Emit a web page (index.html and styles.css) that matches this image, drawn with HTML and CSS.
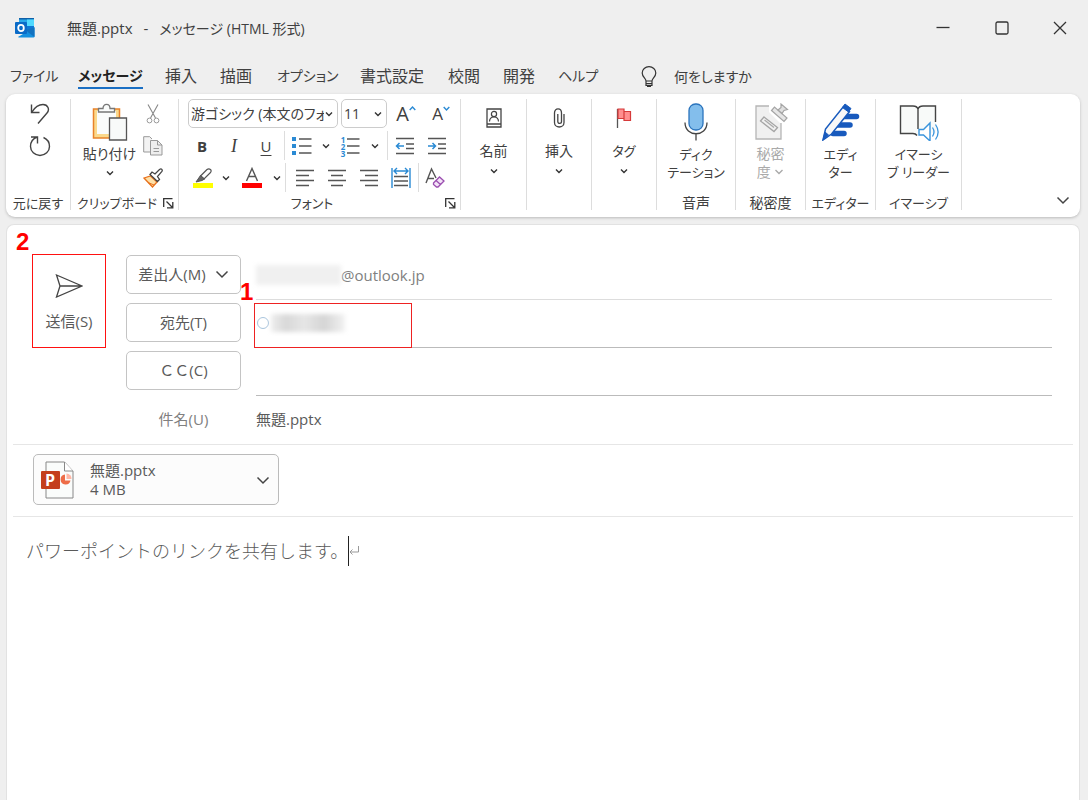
FILE: index.html
```html
<!DOCTYPE html>
<html lang="ja">
<head>
<meta charset="utf-8">
<meta name="viewport" content="width=device-width, initial-scale=1">
<title>無題.pptx - メッセージ (HTML 形式)</title>
<link rel="stylesheet" href="styles.css">
</head>
<body>
<svg class="defs" width="0" height="0" aria-hidden="true">
  <symbol id="chev" viewBox="0 0 10 10"><path d="M2 3.5 5 6.5 8 3.5" fill="none" stroke="#333" stroke-width="1.4"/></symbol>
  <symbol id="chev-lg" viewBox="0 0 14 14"><path d="M1.5 4.5 7 10l5.500-5.500" fill="none" stroke="#444" stroke-width="1.500"/></symbol>
  <symbol id="launch" viewBox="0 0 11 11"><path d="M.7 9V.7H9.500M3.500 3.500l5.500 5.500M9.800 4v5.800H4" fill="none" stroke="#333" stroke-width="1.300"/></symbol>
</svg>

<header class="titlebar">
  <svg class="logo" width="20" height="20" viewBox="0 0 20 20" aria-hidden="true">
    <path d="M4 0h15v12H4z" fill="#28a8ea"/><path d="M4 0h15v1.500H4z" fill="#1060a8"/>
    <path d="M12 1.500h7V8h-7z" fill="#50d9ff"/><path d="M11 8h8v5h-8z" fill="#0f78d4"/>
    <path d="M3 19 19.500 9v9.500a1 1 0 0 1-1 1H4a1 1 0 0 1-1-1z" fill="#1490df"/><path d="M10 12l9.500 7V9.500z" fill="#1272c0"/>
    <rect y="4" width="12" height="12" rx="1" fill="#0a6bc7"/><ellipse cx="6" cy="10" rx="2.800" ry="3.100" fill="none" stroke="#fff" stroke-width="1.800"/>
  </svg>
  <h1 class="title">無題.pptx<span class="dash">-</span><span class="kana">メッセージ (HTML 形式)</span></h1>
  <div class="winbtns">
    <button class="winbtn" aria-label="最小化"><svg width="14" height="14" viewBox="0 0 14 14"><path d="M.5 6.500h13" stroke="#333" stroke-width="1.300"/></svg></button>
    <button class="winbtn" aria-label="最大化"><svg width="14" height="14" viewBox="0 0 14 14"><rect x="1" y="1" width="12" height="12" rx="1.500" fill="none" stroke="#333" stroke-width="1.300"/></svg></button>
    <button class="winbtn" aria-label="閉じる"><svg width="14" height="14" viewBox="0 0 14 14"><path d="M1 1l12 12M13 1 1 13" stroke="#333" stroke-width="1.300"/></svg></button>
  </div>
</header>

<nav class="tabs" aria-label="リボン">
  <a href="#" class="tab kana">ファイル</a>
  <a href="#" class="tab kana active" aria-current="page">メッセージ</a>
  <a href="#" class="tab">挿入</a>
  <a href="#" class="tab">描画</a>
  <a href="#" class="tab kana">オプション</a>
  <a href="#" class="tab">書式設定</a>
  <a href="#" class="tab">校閲</a>
  <a href="#" class="tab">開発</a>
  <a href="#" class="tab kana">ヘルプ</a>
  <a href="#" class="tab tell"><svg width="16" height="22" viewBox="0 0 16 22" aria-hidden="true"><path d="M5 15c0-2.500-3.800-4-3.800-8a6.800 6.300 0 0 1 13.600 0c0 4-3.800 5.500-3.800 8zM5 17.700h6M6 20.300h4M5 15v4.500h6V15" fill="none" stroke="#333" stroke-width="1.200"/></svg>何をしますか</a>
</nav>

<section class="ribbon">
  <div class="group g-undo">
    <div class="tools stack">
      <button class="tool" aria-label="元に戻す"><svg width="20" height="22" viewBox="0 0 20 22"><path d="M1.500 1.500v8h8M2 9C5 4 9 1.500 13 1.500c5 0 7 5 4 8.500L8 20.500" fill="none" stroke="#444" stroke-width="1.400"/></svg></button>
      <button class="tool" aria-label="やり直し"><svg width="22" height="22" viewBox="0 0 22 22"><path d="M2 2h6.500v6.500M8.500 2C4 3.500 1.500 7 1.500 11.500a9.500 9 0 0 0 19 0c0-4-2.500-7.500-6-9" fill="none" stroke="#444" stroke-width="1.400"/></svg></button>
    </div>
    <div class="label">元に戻す</div>
  </div>

  <div class="group g-clip">
    <div class="tools clip">
      <button class="big paste"><svg width="36" height="38" viewBox="0 0 36 38" aria-hidden="true"><path d="M1.500 6h26v29h-26z" fill="#fbd98b" stroke="#e8822a" stroke-width="1.500"/><path d="M5 8h19v23H5z" fill="#fafcfb"/><path d="M6.500 9V5.500h4.500C11 0 18 0 18 5.500h4.500V9z" fill="#fafcfb" stroke="#777" stroke-width="1.300"/><path d="M17.500 15h17v22h-17z" fill="#f8faf9" stroke="#555" stroke-width="1.300"/></svg><span>貼り付け</span><svg width="10" height="10"><use href="#chev"/></svg></button>
      <div class="stack">
        <button class="tool" aria-label="切り取り"><svg width="14" height="20" viewBox="0 0 14 20"><path d="M2 .5 9.500 14M12 .5 4.500 14" fill="none" stroke="#888" stroke-width="1.100"/><circle cx="3.500" cy="16.500" r="2.400" fill="none" stroke="#999"/><circle cx="10.500" cy="16.500" r="2.400" fill="none" stroke="#999"/></svg></button>
        <button class="tool" aria-label="コピー"><svg width="20" height="20" viewBox="0 0 20 20"><path d="M7 16H.7V.7h6L9 3" fill="#f3f3f3" stroke="#999"/><path d="M7.500 4.500h7l4.500 4.500v10H7.500z" fill="#eee" stroke="#999"/><path d="M14.500 4.500V9H19M10.500 12.500h5.500M10.500 15.500h5.500" fill="none" stroke="#999"/></svg></button>
        <button class="tool" aria-label="書式のコピー"><svg width="20" height="20" viewBox="0 0 20 20"><path d="M1 10l6.500-2 6.500 6-4.500 5z" fill="#fde0a8" stroke="#e8701a" stroke-width="1.300"/><path d="M5 14.500l6 2.500" stroke="#e8701a"/><path d="M7 6.500l2-2.500 3 2L16.500 1.500c2-1.500 3.500.5 2.200 2.200L14.500 8.500l2 3-2 2z" fill="#fff" stroke="#444" stroke-width="1.300"/></svg></button>
      </div>
    </div>
    <div class="label with-launch"><span>クリップボード</span><button class="launch" aria-label="クリップボードの設定"><svg width="11" height="11"><use href="#launch"/></svg></button></div>
  </div>

  <div class="group g-font">
    <div class="tools fonts">
      <div class="frow r1">
        <label class="pick"><select aria-label="フォント"><option>游ゴシック (本文のフォント)</option></select><svg width="10" height="10"><use href="#chev"/></svg></label>
        <label class="pick"><select aria-label="フォント サイズ"><option>11</option></select><svg width="10" height="10"><use href="#chev"/></svg></label>
        <button class="tool grow" aria-label="フォント サイズの拡大">A<svg width="7" height="20" viewBox="0 0 7 20"><path d="M.7 6l2.800-3 2.800 3" fill="none" stroke="#2a8ad4" stroke-width="1.400"/></svg></button>
        <button class="tool shrink" aria-label="フォント サイズの縮小">A<svg width="7" height="20" viewBox="0 0 7 20"><path d="M.7 3l2.800 3 2.800-3" fill="none" stroke="#2a8ad4" stroke-width="1.400"/></svg></button>
      </div>
      <div class="frow r2">
        <button class="tool b">B</button>
        <button class="tool i">I</button>
        <button class="tool u">U</button>
        <i class="sep"></i>
        <button class="tool" aria-label="箇条書き"><svg width="20" height="20" viewBox="0 0 20 20"><path d="M0 1h4v4H0zM0 8h4v4H0zM0 15h4v4H0z" fill="#2a8ad4"/><path d="M7 3h12.500M7 10h12.500M7 17h12.500" stroke="#555" stroke-width="1.300"/></svg></button>
        <button class="tool" aria-label="箇条書きの種類"><svg width="10" height="10"><use href="#chev"/></svg></button>
        <button class="tool numbered" aria-label="段落番号"><span class="nums">1<br>2<br>3</span><svg width="13" height="20" viewBox="0 0 13 20"><path d="M0 3h12.500M0 10h12.500M0 17h12.500" stroke="#555" stroke-width="1.300"/></svg></button>
        <button class="tool" aria-label="段落番号の種類"><svg width="10" height="10"><use href="#chev"/></svg></button>
        <i class="sep"></i>
        <button class="tool" aria-label="インデントを減らす"><svg width="20" height="20" viewBox="0 0 20 20"><path d="M1 2.500h18M11 8h8M11 12.500h8M1 17.500h18" stroke="#555" stroke-width="1.300"/><path d="M9 10H1.500M4.500 7l-3 3 3 3" fill="none" stroke="#2a8ad4" stroke-width="1.500"/></svg></button>
        <button class="tool" aria-label="インデントを増やす"><svg width="20" height="20" viewBox="0 0 20 20"><path d="M1 2.500h18M11 8h8M11 12.500h8M1 17.500h18" stroke="#555" stroke-width="1.300"/><path d="M1 10h7.500M5.500 7l3 3-3 3" fill="none" stroke="#2a8ad4" stroke-width="1.500"/></svg></button>
      </div>
      <div class="frow r3">
        <button class="tool" aria-label="蛍光ペンの色"><svg width="20" height="22" viewBox="0 0 20 22"><path d="M7.500 9 14 2.500c2.500-2 5.500 1 3.500 3L11 12z" fill="#fff" stroke="#555" stroke-width="1.200"/><path d="M7.500 8.500 11.500 12 9 13.500 3 15z" fill="#666" stroke="#555"/><path d="M0 16h20v5H0z" fill="#ff0"/></svg></button>
        <button class="tool" aria-label="蛍光ペンの色の一覧"><svg width="10" height="10"><use href="#chev"/></svg></button>
        <button class="tool" aria-label="フォントの色"><svg width="20" height="22" viewBox="0 0 20 22"><path d="M4.500 14 10 1.500 15.500 14M6.500 9.500h7" fill="none" stroke="#555" stroke-width="1.400"/><path d="M0 16h20v5H0z" fill="#f00"/></svg></button>
        <button class="tool" aria-label="フォントの色の一覧"><svg width="10" height="10"><use href="#chev"/></svg></button>
        <i class="sep"></i>
        <button class="tool" aria-label="左揃え"><svg width="20" height="20" viewBox="0 0 20 20"><path d="M1 2.500h18M1 7.500h13M1 12.500h18M1 17.500h13" stroke="#555" stroke-width="1.300"/></svg></button>
        <button class="tool" aria-label="中央揃え"><svg width="20" height="20" viewBox="0 0 20 20"><path d="M1 2.500h18M4 7.500h12M1 12.500h18M4 17.500h12" stroke="#555" stroke-width="1.300"/></svg></button>
        <button class="tool" aria-label="右揃え"><svg width="20" height="20" viewBox="0 0 20 20"><path d="M1 2.500h18M6 7.500h13M1 12.500h18M6 17.500h13" stroke="#555" stroke-width="1.300"/></svg></button>
        <button class="tool" aria-label="均等割り付け"><svg width="20" height="22" viewBox="0 0 20 22"><path d="M1 1v20M19 1v20M3 4h14M6 1 3 4l3 3M14 1l3 3-3 3" fill="none" stroke="#2a8ad4" stroke-width="1.400"/><path d="M3 9.500h14M3 14h14M3 18.500h14" stroke="#555" stroke-width="1.300"/></svg></button>
        <i class="sep"></i>
        <button class="tool" aria-label="書式のクリア"><svg width="20" height="22" viewBox="0 0 20 22"><path d="M1 16 6.500 2l4.500 9M3 11.500h6" fill="none" stroke="#555" stroke-width="1.400"/><path d="M8.500 16l6-6 4.500 4-6 6h-1.500l-3-2.500zM11 13.500l4.500 4" fill="#f3e3f7" stroke="#9b4fb0" stroke-width="1.300"/></svg></button>
      </div>
    </div>
    <div class="label with-launch center"><span>フォント</span><button class="launch" aria-label="フォントの設定"><svg width="11" height="11"><use href="#launch"/></svg></button></div>
  </div>

  <div class="group g-name">
    <button class="big mid"><svg width="16" height="20" viewBox="0 0 16 20" aria-hidden="true"><path d="M1 1h14v18H1zM1 16h14" fill="none" stroke="#444" stroke-width="1.300"/><circle cx="8" cy="6" r="2.600" fill="none" stroke="#444" stroke-width="1.200"/><path d="M3.500 13.500c.3-6 8.700-6 9 0" fill="none" stroke="#444" stroke-width="1.200"/></svg><span>名前</span><svg width="10" height="10"><use href="#chev"/></svg></button>
  </div>
  <div class="group g-insert">
    <button class="big mid"><svg width="16" height="20" viewBox="0 0 16 20" aria-hidden="true"><path d="M13 6v8.500c0 6-9.500 6-9.500 0V5c0-5.500 7-5.500 7 0v8.500c0 2.500-3.700 2.500-3.700 0V6" fill="none" stroke="#444" stroke-width="1.300"/></svg><span>挿入</span><svg width="10" height="10"><use href="#chev"/></svg></button>
  </div>
  <div class="group g-tag">
    <button class="big mid"><svg width="16" height="20" viewBox="0 0 16 20" aria-hidden="true"><path d="M1.500 1v19" stroke="#555" stroke-width="1.300"/><path d="M2 1h6v9.500H2zM8 3.500h6.500v9H8z" fill="#ff8e8e" stroke="#d63a3a" stroke-width="1.200"/></svg><span class="narrow">タグ</span><svg width="10" height="10"><use href="#chev"/></svg></button>
  </div>

  <div class="group g-voice">
    <button class="big"><svg width="24" height="38" viewBox="0 0 24 38" aria-hidden="true"><rect x="5" y="1" width="14" height="26" rx="6.500" fill="#83beec" stroke="#2b74bd" stroke-width="1.300"/><path d="M1 19.500c0 15 22 15 22 0M12 31v6.500" fill="none" stroke="#444" stroke-width="1.300"/></svg><span class="narrow">ディク<br>テーション</span></button>
    <div class="label kanji">音声</div>
  </div>
  <div class="group g-sens">
    <button class="big off" disabled><svg width="36" height="38" viewBox="0 0 36 38" aria-hidden="true"><path d="M3 3h25v33H3z" fill="#f0f0f0" stroke="#b5b5b5" stroke-width="1.300"/><path d="M16 1h14v19h-3L16 9z" fill="#fff"/><path d="M11 14l13.500 10.500-3.500 4L7.500 18z" fill="#f0f0f0" stroke="#a5a5a5" stroke-width="1.300"/><path d="M11.500 17 21 24.500" stroke="#aaa" stroke-width="1.300"/><path d="M18.500 7.500 31 18.500l3-3.500-12.500-11z" fill="#e6e6e6" stroke="#a5a5a5" stroke-width="1.200"/><path d="M25 7l3-2.500V1l6.500 5.500-3.500 1-2 3z" fill="#e0e0e0" stroke="#a5a5a5" stroke-width="1.200"/></svg><span>秘密<br>度 <svg width="10" height="10" viewBox="0 0 10 10"><path d="M1.500 3 5 6.500 8.500 3" fill="none" stroke="#aaa" stroke-width="1.400"/></svg></span></button>
    <div class="label kanji">秘密度</div>
  </div>
  <div class="group g-editor">
    <button class="big"><svg width="38" height="38" viewBox="0 0 38 38" aria-hidden="true"><path d="M20 13.500h14.500M16 22h12M11 30.500h11" stroke="#185abd" stroke-width="5.500" stroke-linecap="round"/><path d="M1 37l2.500-11L21.500 3.500l6 5L9.500 31z" fill="#f8f8f8" stroke="#185abd" stroke-width="1.500"/><path d="M1 37l2-8 3.500 3zM20.500 4.500l2.500-3.500 6 4.500-2.500 3.500z" fill="#185abd" stroke="#185abd"/></svg><span class="narrow">エディ<br>ター</span></button>
    <div class="label">エディター</div>
  </div>
  <div class="group g-reader">
    <button class="big"><svg width="40" height="38" viewBox="0 0 40 38" aria-hidden="true"><path d="M19 5.500C17.500 3 16 3 14 3H1.500v27.500H14c2 0 3.500.5 5 2.500V5.500C20.500 3 22 3 24 3h13v27H19z" fill="#f8faf9"/><path d="M18 32.500c-1-1.500-2-2-4-2H1.500V3H14c2 0 4 0 5 3 1-3 3-3 5-3h12.500v16M19 5.500V26" fill="none" stroke="#444" stroke-width="1.400"/><path d="M20 26.500h4.500L31 20v18l-6.500-6H20z" fill="#fff" stroke="#3a94dc" stroke-width="1.400"/><path d="M33.500 24.500c2 3 2 6 0 9M36.500 21.500c3.500 5 3.500 10 0 15" fill="none" stroke="#3a94dc" stroke-width="1.300"/></svg><span class="narrow">イマーシ<br>ブ リーダー</span></button>
    <div class="label">イマーシブ</div>
  </div>
  <button class="collapse" aria-label="リボンを折りたたむ"><svg width="14" height="14"><use href="#chev-lg"/></svg></button>
</section>

<main class="compose">
  <form class="head">
    <div class="sendcell">
      <button type="button" class="send"><svg width="28" height="24" viewBox="0 0 28 24" aria-hidden="true"><path d="M1.500 1 27 12 1.500 23l3.500-11zM5 12h21" fill="none" stroke="#444" stroke-width="1.300"/></svg><span>送信(S)</span></button>
      <strong class="mark two">2</strong>
    </div>
    <div class="rows">
      <div class="row">
        <button type="button" class="field-btn">差出人(M)<svg width="14" height="14"><use href="#chev-lg"/></svg></button>
        <div class="value light"><span class="hidden-name"></span>@outlook.jp</div>
      </div>
      <div class="row">
        <button type="button" class="field-btn">宛先(T)</button>
        <div class="value"><i class="presence"></i><span class="hidden-to"></span><input class="entry" aria-label="宛先"><span class="frame"></span><strong class="mark one">1</strong></div>
      </div>
      <div class="row">
        <button type="button" class="field-btn full">ＣＣ(C)</button>
        <div class="value"><input class="entry" aria-label="CC"></div>
      </div>
      <div class="row">
        <label class="field-label" for="subject">件名(U)</label>
        <div class="value bare"><input class="entry" id="subject" value="無題.pptx"></div>
      </div>
    </div>
  </form>
  <div class="attachments">
    <button class="file">
      <svg width="34" height="38" viewBox="0 0 34 38" aria-hidden="true"><path d="M5 1h18.500l8.500 9v27H5z" fill="#fafcfb" stroke="#888"/><path d="M23.500 1v9H32" fill="#fff" stroke="#888"/><path d="M24 13.500a5 5 0 1 0 5.500 6H24z" fill="#ed6c47"/><path d="M25.500 12.500a5 5 0 0 1 5 5.500h-5z" fill="#ffb6a5"/><rect x="0" y="10" width="19" height="18" rx="1" fill="#c43e1c"/><text class="plogo" x="4" y="25">P</text></svg>
      <span class="fileinfo"><span>無題.pptx</span><small>4 MB</small></span>
      <svg width="14" height="14"><use href="#chev-lg"/></svg>
    </button>
  </div>
  <div class="bodytext" role="textbox" aria-label="本文" contenteditable="true"><span>パワーポイントのリンクを共有します。</span><i class="caret"></i><svg width="11" height="10" viewBox="0 0 11 10"><path d="M9.500 0v6H1M3.500 3.500 1 6l2.500 2.500" fill="none" stroke="#999"/></svg></div>
</main>
</body>
</html>
```
FILE: styles.css
```css
* { box-sizing: border-box; }

body {
  margin: 0;
  min-height: 100vh;
  display: flex;
  flex-direction: column;
  background: #efefef;
  color: #404040;
  font: 15px/20px "Open Sans", "Noto Sans CJK JP", sans-serif;
  font-feature-settings: "palt";
}

button, input, select {
  font: inherit;
  font-feature-settings: inherit;
  color: inherit;
  margin: 0;
  padding: 0;
  border: 0;
  background: none;
}

svg { display: block; flex: none; }
.defs { position: absolute; }

.titlebar {
  display: flex;
  align-items: center;
  height: 56px;
  padding-left: 15px;
}
.title {
  flex: 1;
  margin: 0 0 0 32px;
  font-size: 15px;
  font-weight: 400;
}
.dash { margin: 0 11px; }
.winbtns { display: flex; }
.winbtn {
  display: grid;
  place-items: center;
  width: 59px;
  height: 56px;
}
.winbtn:last-child { width: 57px; }

.tabs {
  display: grid;
  grid-template-columns: 68px 87px 55px 57px 83px 88px 55px 55px 83px auto;
  justify-content: start;
  height: 38px;
  padding-left: 10px;
  font-size: 16px;
}
.tab {
  justify-self: start;
  align-self: start;
  padding-top: 10px;
  height: 33px;
  color: inherit;
  text-decoration: none;
  white-space: nowrap;
}
.kana { font-size: 14px; }
.active {
  border-bottom: 2px solid #1a6fc4;
  color: #222;
  font-weight: 700;
}
.tell {
  display: flex;
  align-items: center;
  gap: 17px;
  padding-top: 8px;
  font-size: 14px;
}

.ribbon {
  display: flex;
  margin: 0 8px 0 6px;
  padding: 5px 0 7px;
  border-radius: 9px;
  background: #fff;
  box-shadow: 0 1px 3px #bbb;
}
.group {
  display: flex;
  flex-direction: column;
  justify-content: space-between;
  flex: none;
  height: 111px;
  border-right: 1px solid #ddd;
  white-space: nowrap;
}
.g-undo { width: 65px; }
.g-undo .stack { padding-left: 3px; }
.g-clip { width: 108px; }
.g-font { width: 282px; }
.g-name { width: 66px; }
.g-insert { width: 65px; }
.g-tag { width: 65px; }
.g-voice { width: 79px; }
.g-sens, .g-editor { width: 70px; }
.g-reader { width: 86px; }

.label {
  display: flex;
  justify-content: center;
  font-size: 13px;
  line-height: 14px;
}
.kanji { font-size: 14px; }
.with-launch {
  justify-content: space-between;
  align-items: center;
  padding: 0 3px 0 6px;
}
.with-launch.center > span { flex: 1; text-align: center; }
.center { padding-left: 0; }
.launch { width: 12px; height: 12px; }

.tool {
  display: grid;
  place-items: center;
  height: 30px;
}
.stack {
  display: flex;
  flex-direction: column;
  align-items: center;
  gap: 2px;
}
.clip { display: flex; padding-left: 10px; }
.clip .stack { flex: 1; padding-right: 10px; }
.paste { width: 57px; }

.big {
  display: flex;
  flex-direction: column;
  align-items: center;
  padding-top: 4px;
  font-size: 14px;
  line-height: 18px;
}
.big > span { margin-top: 4px; }
.big > .narrow { font-size: 13px; }
.big.mid { padding-top: 9px; line-height: 20px; }
.big.mid > span { margin-top: 13px; }
.big > span + svg { margin-top: 5px; }
.off { color: #aaa; }
.off span svg { display: inline; }

.frow { display: grid; height: 32px; padding-left: 7px; }
.r1 { grid-template-columns: 150px 46px 32px 32px; column-gap: 3px; padding-left: 9px; }
.r2 { grid-template-columns: 32px 32px 32px 5px 30px 18px 31px 18px 6px 30px 33px; }
.r3 { grid-template-columns: 34px 12px 40px 10px 7px 32px 32px 32px 32px 2px 32px; }
.sep { justify-self: center; width: 1px; height: 29px; background: #ddd; }

.pick {
  display: grid;
  grid-template-columns: 1fr 13px;
  align-items: center;
  height: 29px;
  border: 1px solid #ccc;
  border-radius: 5px;
}
.pick select {
  grid-area: 1 / 1 / 2 / 2;
  width: 100%;
  padding-left: 2px;
  appearance: none;
  font-size: 14px;
  overflow: hidden;
}
.grow, .shrink { grid-auto-flow: column; justify-content: center; }
.grow { font-size: 20px; }
.shrink { font-size: 17px; }
.b { font-weight: 700; }
.i { font-family: "Liberation Serif", serif; font-style: italic; font-size: 18px; }
.u { text-decoration: underline; text-underline-offset: 3px; }
.numbered { grid-auto-flow: column; justify-content: center; column-gap: 2px; }
.nums { color: #2a8ad4; font: 700 8px/7px "Open Sans", sans-serif; }

.collapse { margin: 0 10px 3px auto; align-self: flex-end; }

.compose {
  flex: 1;
  margin: 7px 8px 0 6px;
  padding: 0 6px;
  border: 1px solid #e2e2e2;
  border-bottom: 0;
  border-radius: 8px 8px 0 0;
  background: #fff;
  color: #5a5a5a;
}
.head {
  display: flex;
  gap: 20px;
  padding: 29px 21px 0 19px;
  border-bottom: 1px solid #e6e6e6;
}
.sendcell { position: relative; }
.send {
  display: flex;
  flex-direction: column;
  align-items: center;
  gap: 13px;
  width: 74px;
  height: 94px;
  padding-top: 19px;
  border: 1px solid #f11;
}
.mark {
  position: absolute;
  color: #f00;
  font: 700 24px/24px "Liberation Sans", sans-serif;
}
.two { left: -16px; top: -24px; }
.one { left: -16px; top: -23px; }

.rows { flex: 1; padding-top: 1px; }
.row {
  display: grid;
  grid-template-columns: 115px 1fr;
  column-gap: 15px;
  height: 48px;
}
.row:last-child { height: 45px; }
.field-btn {
  display: flex;
  align-items: center;
  justify-content: center;
  gap: 9px;
  height: 39px;
  padding-bottom: 1px;
  border: 1px solid #c4c4c4;
  border-radius: 5px;
}
.full { font-feature-settings: normal; }
.field-label {
  align-self: start;
  padding-top: 10px;
  text-align: center;
  color: #808080;
}
.value {
  position: relative;
  display: flex;
  align-items: center;
  height: 45px;
  padding-bottom: 5px;
  border-bottom: 1px solid #bbb;
}
.row:first-child .value { border-color: #ddd; }
.bare { border: 0; height: 39px; padding: 0; }
.light { color: #808080; }
.entry { flex: 1; min-width: 0; height: 30px; outline: 0; }
.hidden-name {
  width: 85px;
  height: 20px;
  background: #f0f0f0;
  filter: blur(2px);
}
.presence {
  width: 12px;
  height: 12px;
  margin-left: 1px;
  border: 1px solid #a9c5dd;
  border-radius: 50%;
}
.hidden-to {
  width: 74px;
  height: 18px;
  margin-left: 2px;
  background: linear-gradient(90deg, #eee, #d8d8d8 20%, #e6e6e6 45%, #d5d5d5 72%, #f2f2f2);
  filter: blur(2px);
}
.frame {
  position: absolute;
  left: -2px;
  top: 0;
  width: 158px;
  height: 45px;
  border: 1px solid #e22;
}

.attachments { padding: 9px 20px 11px; border-bottom: 1px solid #e6e6e6; }
.file {
  display: flex;
  align-items: center;
  width: 246px;
  height: 51px;
  padding: 0 8px 0 7px;
  border: 1px solid #bbb;
  border-radius: 5px;
  background: #fcfcfc;
  text-align: left;
}
.fileinfo {
  flex: 1;
  display: flex;
  flex-direction: column;
  padding-left: 15px;
  line-height: 19px;
}
.fileinfo small { font-size: 15px; }
.plogo { font: 700 16px "Open Sans", sans-serif; fill: #fff; }

.bodytext {
  display: flex;
  align-items: center;
  padding: 19px 13px;
  outline: 0;
  font-size: 18px;
  font-weight: 300;
  font-feature-settings: normal;
}
.caret { width: 1px; height: 30px; background: #222; }
```
